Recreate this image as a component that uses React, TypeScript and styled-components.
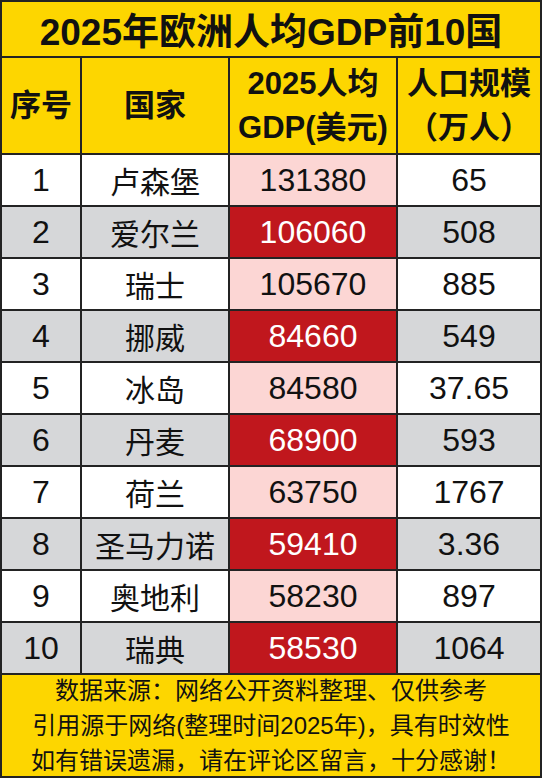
import React from 'react';
import styled, { createGlobalStyle } from 'styled-components';

interface Row {
    rank: number;
    country: string;
    gdp: string;
    people: string;
}

const rows: Row[] = [
    { rank: 1, country: '卢森堡', gdp: '131380', people: '65' },
    { rank: 2, country: '爱尔兰', gdp: '106060', people: '508' },
    { rank: 3, country: '瑞士', gdp: '105670', people: '885' },
    { rank: 4, country: '挪威', gdp: '84660', people: '549' },
    { rank: 5, country: '冰岛', gdp: '84580', people: '37.65' },
    { rank: 6, country: '丹麦', gdp: '68900', people: '593' },
    { rank: 7, country: '荷兰', gdp: '63750', people: '1767' },
    { rank: 8, country: '圣马力诺', gdp: '59410', people: '3.36' },
    { rank: 9, country: '奥地利', gdp: '58230', people: '897' },
    { rank: 10, country: '瑞典', gdp: '58530', people: '1064' },
];

const GlobalStyle = createGlobalStyle`
    body {
        margin: 0;
        background: #ffffff;
        font-family: "Liberation Sans", "Noto Sans CJK SC", sans-serif;
    }
`

const Sheet = styled.div`
    width: 542px;
    box-sizing: border-box;
    display: grid;
    grid-template-columns: 78px 146px 166px 142px;
    grid-template-rows: 54px 95px repeat(10, 50px) 101px;
    gap: 2px;
    padding: 2px;
    background: #232323;
    color: #111111;
`
const Title = styled.div`
    grid-column: 1 / -1;
    background: #fdd600;
    display: flex;
    align-items: center;
    justify-content: center;
    font-size: 37px;
    font-weight: bold;
`
const HeadCell = styled.div`
    background: #fdd600;
    display: flex;
    flex-direction: column;
    align-items: center;
    justify-content: center;
    font-size: 31px;
    font-weight: bold;
    line-height: 44px;
    white-space: nowrap;
`
const Cell = styled.div<{ $shade: boolean }>`
    background: ${props => props.$shade ? '#d6d7d9' : '#ffffff'};
    display: flex;
    align-items: center;
    justify-content: center;
    font-size: 32px;
    white-space: nowrap;
`
const NameCell = styled(Cell)`
    font-size: 30px;
`
const GdpCell = styled(Cell)<{ $strong: boolean }>`
    background: ${props => props.$strong ? '#c0171d' : '#fcd6d4'};
    color: ${props => props.$strong ? '#ffffff' : '#111111'};
`
const Footer = styled.div`
    grid-column: 1 / -1;
    background: #fdd600;
    display: flex;
    flex-direction: column;
    align-items: center;
    justify-content: center;
    font-size: 24px;
    line-height: 35px;
    white-space: nowrap;
`

const App: React.FC = () => {
    return (
        <>
            <GlobalStyle />
            <Sheet>
                <Title>2025年欧洲人均GDP前10国</Title>
                <HeadCell>序号</HeadCell>
                <HeadCell>国家</HeadCell>
                <HeadCell>
                    <span>2025人均</span>
                    <span>GDP(美元)</span>
                </HeadCell>
                <HeadCell>
                    <span>人口规模</span>
                    <span>（万人）</span>
                </HeadCell>
                {rows.map(row => {
                    const even = row.rank % 2 === 0;
                    return (
                        <React.Fragment key={row.rank}>
                            <Cell $shade={even}>{row.rank}</Cell>
                            <NameCell $shade={even}>{row.country}</NameCell>
                            <GdpCell $shade={even} $strong={even}>{row.gdp}</GdpCell>
                            <Cell $shade={even}>{row.people}</Cell>
                        </React.Fragment>
                    )
                })}
                <Footer>
                    <span>数据来源：网络公开资料整理、仅供参考</span>
                    <span>引用源于网络(整理时间2025年)，具有时效性</span>
                    <span>如有错误遗漏，请在评论区留言，十分感谢！</span>
                </Footer>
            </Sheet>
        </>
    )
}

export default App;
